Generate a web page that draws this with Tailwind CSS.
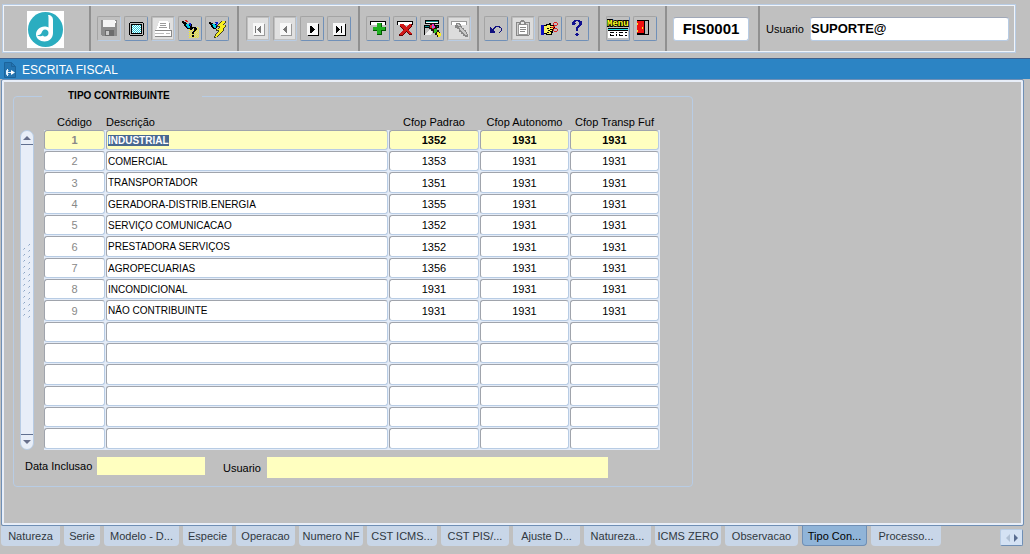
<!DOCTYPE html>
<html lang="pt-BR">
<head>
    <meta charset="UTF-8">
    <meta name="viewport" content="width=device-width, initial-scale=1.0">
    <title>Escrita Fiscal</title>
    <script src="https://cdn.jsdelivr.net/npm/@tailwindcss/browser@4"></script>
</head>
<body class="min-h-screen flex flex-col bg-[#c0c0c0] font-['Liberation_Sans',Arial,sans-serif] text-[11px] leading-[14px] text-black overflow-hidden">

    <!-- Toolbar -->
    <header class="mt-1 ml-[2px] mr-[14px] mb-[5px] border border-[#b8cce4]">
        <div class="flex h-[47px] border border-[#f0f4fa] divide-x-2 divide-[#909090] [&_button]:w-6 [&_button]:h-[25px] [&_button]:rounded-xs [&_button]:border [&_button]:border-t-[#a4a4a4] [&_button]:border-l-[#a4a4a4] [&_button]:border-r-[#7090b8] [&_button]:border-b-[#7090b8] [&_button:disabled]:border-r-[#b8cce4] [&_button:disabled]:border-b-[#b8cce4] [&_button_svg]:block">

            <div class="w-[87px] shrink-0 pl-[23px] pt-[5px]">
                <svg width="37" height="37" viewBox="0 0 37 37" role="img" aria-label="Logo">
                    <rect width="37" height="37" fill="#fff"/>
                    <circle cx="18.5" cy="18.5" r="17.5" fill="#2badc0"/>
                    <path d="M21 4c3 0 5 2 5 5v13c0 5-4 8.500-8.500 8.500S9 27.500 9 23.500s3.500-8 8.500-8c1.500 0 3 .4 4 1V8c0-1.500 0-3-.5-4z" fill="#fff"/>
                    <path d="M18 18.500c2 0 3.500 1.500 3.500 3.500s-1.500 3.500-3.500 3.500c-1 0-1.500-.3-2-1-1.500 1-4 1-6-.5 2 .3 4-.5 4.500-2s1.500-3.500 3.500-3.500z" fill="#2badc0"/>
                </svg>
            </div>

            <!-- File -->
            <div class="flex items-center gap-[3px] pl-[6px] pr-2 shrink-0">
                <button type="button" disabled aria-label="Salvar">
                    <svg width="22" height="23" shape-rendering="crispEdges">
                        <path d="M3 3h16v16H4l-1-1z" fill="#8c8c8c"/>
                        <path d="M5 3h12v7H5z" fill="#f4f4f4"/>
                        <path d="M17 4h1v2h-1z" fill="#fff"/>
                        <path d="M7 13h9v6H7z" fill="#6c6c6c"/>
                        <path d="M8 14h3v4H8z" fill="#c8c8c8"/>
                    </svg>
                </button>
                <button type="button" aria-label="Tela">
                    <svg width="22" height="23" shape-rendering="crispEdges">
                        <path d="M5 5h13v1h1v12h-1v1H5v-1H4V6h1z" fill="#000"/>
                        <path d="M5 6h13v12H5z" fill="#c0c0c0"/>
                        <path d="M6 7h11v10H6z" fill="#000"/>
                        <path d="M7 8h9v8H7z" fill="#fff"/>
                        <path d="M7 8.500h9M7 10.500h9M7 12.500h9M7 14.500h9" stroke="#20c8d8" stroke-dasharray="1 1"/>
                        <path d="M8 9.500h8M8 11.500h8M8 13.500h8M8 15.500h8" stroke="#20c8d8" stroke-dasharray="1 1"/>
                    </svg>
                </button>
                <button type="button" disabled aria-label="Imprimir">
                    <svg width="22" height="23" shape-rendering="crispEdges">
                        <path d="M1 1h20v21H1z" fill="#e0e0e0"/>
                        <path d="M7 4h9v1h1v7H5V9h1V6h1z" fill="#fff"/>
                        <path d="M8 6.500h6M8 8.500h6M7 10.500h8" stroke="#999"/>
                        <path d="M17 6h1v6h-1z" fill="#999"/>
                        <path d="M4 12h14v1h1v6H3v-6h1z" fill="#fff"/>
                        <path d="M3 13.500h16M3 19.500h17" stroke="#888"/>
                        <path d="M19 13h1v6h-1z" fill="#888"/>
                        <path d="M3 16.500h9M14 16.500h4" stroke="#bbb"/>
                    </svg>
                </button>
                <button type="button" aria-label="Consulta ajuda">
                    <svg width="22" height="23" shape-rendering="crispEdges">
                        <path d="M10 10.500h10M10 12.500h10M10 14.500h10M10 16.500h10M10 18.500h10M10 20.500h10" stroke="#f8f020" stroke-dasharray="1 1"/>
                        <path d="M11 11.500h9M11 13.500h9M11 15.500h9M11 17.500h9M11 19.500h9" stroke="#f8f020" stroke-dasharray="1 1"/>
                        <path d="M3 4.500h2M3 5.500h4M4 6.500h4M5 7.500h8M5 8.500h8M6 9.500h7M7 10.500h5M8 11.500h3" stroke="#000"/>
                        <path d="M7 7.500h3M7 8.500h3M8 9.500h3M9 10.500h2" stroke="#00d0e8"/>
                        <path d="M10 6.500h2M10 7.500h2M11 8.500h1M8 10.500h1" stroke="#1020d0"/>
                        <path d="M6 3.500h2M7 4.500h2" stroke="#e02020"/>
                        <path d="M12 10.500h5M11 11.500h3M15 11.500h3M11 12.500h2M15 12.500h3M15 13.500h2M14 14.500h2M13 15.500h2M13 16.500h2M13 18.500h2M13 19.500h2" stroke="#000"/>
                    </svg>
                </button>
                <button type="button" aria-label="Executar consulta">
                    <svg width="22" height="23" shape-rendering="crispEdges">
                        <path d="M3 5.500h2M3 6.500h4M4 7.500h7M5 8.500h8M5 9.500h7M6 10.500h5M7 11.500h3" stroke="#000"/>
                        <path d="M6 7.500h3M7 8.500h3M7 9.500h3M8 10.500h2" stroke="#00d0e8"/>
                        <path d="M9 5.500h3M10 6.500h2M10 7.500h1M10 8.500h1" stroke="#1020d0"/>
                        <path d="M15 4.500h5M14 5.500h6M13 6.500h6M12 7.500h6M11 8.500h9M11 9.500h9M13 10.500h6M12 11.500h6M10 12.500h8M10 13.500h8M12 14.500h5M11 15.500h5M10 16.500h5M9 17.500h5M9 18.500h4M8 19.500h4M8 20.500h2" stroke="#404020"/>
                        <path d="M16 4.500h3M15 5.500h4M14 6.500h4M13 7.500h4M12 8.500h7M14 9.500h5M14 10.500h4M13 11.500h4M11 12.500h6M13 13.500h4M13 14.500h3M12 15.500h3M11 16.500h3M10 17.500h3M10 18.500h2M9 19.500h2" stroke="#f8f020"/>
                    </svg>
                </button>
            </div>

            <!-- Record navigation -->
            <div class="flex items-center gap-[3px] px-[7px] shrink-0">
                <button type="button" disabled aria-label="Primeiro registro">
                    <svg width="22" height="23" shape-rendering="crispEdges">
                        <path d="M1 1h20v21H1z" fill="#e0e0e0"/>
                        <path d="M7 7h11v12H7z" fill="#999"/>
                        <path d="M6 6h11v12H6z" fill="#f8f8f8"/>
                        <path d="M8 9h1v7H8zM13 9h1v7h-1v-1h-1v-1h-1v-1h-1v-1h1v-1h1v-1h1z" fill="#777"/>
                    </svg>
                </button>
                <button type="button" disabled aria-label="Registro anterior">
                    <svg width="22" height="23" shape-rendering="crispEdges">
                        <path d="M1 1h20v21H1z" fill="#e0e0e0"/>
                        <path d="M7 7h11v12H7z" fill="#999"/>
                        <path d="M6 6h11v12H6z" fill="#f8f8f8"/>
                        <path d="M12 9h1v7h-1v-1h-1v-1h-1v-1H9v-1h1v-1h1v-1h1z" fill="#777"/>
                    </svg>
                </button>
                <button type="button" aria-label="Proximo registro">
                    <svg width="22" height="23" shape-rendering="crispEdges">
                        <path d="M7 7h11v12H7z" fill="#000"/>
                        <path d="M6 6h11v12H6z" fill="#f8f8f8"/>
                        <path d="M9 9h2v1h1v1h1v1h1v1h-1v1h-1v1h-1v1H9z" fill="#000"/>
                    </svg>
                </button>
                <button type="button" aria-label="Ultimo registro">
                    <svg width="22" height="23" shape-rendering="crispEdges">
                        <path d="M6 7h12v12H6z" fill="#000"/>
                        <path d="M5 6h12v12H5z" fill="#f8f8f8"/>
                        <path d="M8 9h1v1h1v1h1v1h1v1h-1v1h-1v1H9v1H8zM13 9h1v7h-1z" fill="#000"/>
                    </svg>
                </button>
            </div>

            <!-- Record editing -->
            <div class="flex items-center gap-[3px] px-[6px] shrink-0">
                <button type="button" aria-label="Inserir registro">
                    <svg width="22" height="23" shape-rendering="crispEdges">
                        <path d="M3 4h16v4H3z" fill="#000"/>
                        <path d="M4 5h14v3H4z" fill="#fff"/>
                        <path d="M10 6h5v4h4v4h-4v4h-5v-4H6v-4h4z" fill="#005800"/>
                        <path d="M10 6h4v4h4v3h-4v4h-4v-4H6v-3h4z" fill="#20b020"/>
                    </svg>
                </button>
                <button type="button" aria-label="Excluir registro">
                    <svg width="22" height="23" shape-rendering="crispEdges">
                        <path d="M3 4h16v4H3z" fill="#000"/>
                        <path d="M4 5h14v3H4z" fill="#fff"/>
                        <path d="M6 8l3-1 3 3 4-3h2v2l-4 4 4 4v1h-3l-3-3-4 4H5v-2l4-4-3-3z" fill="#600000"/>
                        <path d="M6 7h3l3 3 3-3h2v2l-3 3 4 5h-3l-3-3-3 4H6v-2l4-4-4-3z" fill="#d01818"/>
                    </svg>
                </button>
                <button type="button" aria-label="Entrar consulta">
                    <svg width="22" height="23" shape-rendering="crispEdges">
                        <path d="M4 3h14v4H4zM3 8h15v3H3zM3 11h1v7H3z" fill="#000"/>
                        <path d="M5 4h12v1H5zM4 9h13v1H4z" fill="#108888"/>
                        <path d="M5 5h12v1H5z" fill="#fff"/>
                        <path d="M4 17.500h6M5 16.500h6M6 15.500h5M7 14.500h4M8 13.500h3" stroke="#f0f0f0"/>
                        <path d="M9 6h4v1h1v2h2v4h2v2h1v5h-3v-2h-2v-2h-2v-2h-2v-2H8V8h1z" fill="#201010"/>
                        <path d="M9 8h2v3H9zM11 11h2v1h-2z" fill="#e82020"/>
                        <path d="M11 7h2v2h-2zM12 9h2v2h-2z" fill="#f030d0"/>
                        <path d="M11 9h1v2h-1z" fill="#30c8e0"/>
                        <path d="M13 12h3v3h-1v1h-2z" fill="#30c020"/>
                        <path d="M16 15h2v1h2v3h-1v1h-2v-2h-1z" fill="#f8f020"/>
                    </svg>
                </button>
                <button type="button" disabled aria-label="Cancelar consulta">
                    <svg width="22" height="23" shape-rendering="crispEdges">
                        <path d="M1 1h20v21H1z" fill="#dcdcdc"/>
                        <path d="M3 4h16v4H3z" fill="#999"/>
                        <path d="M4 5h14v3H4z" fill="#fff"/>
                        <path d="M8 6h4v1h1v2h1v2h2v2h2v2h1v2h1v3h-3v-1h-2v-2h-2v-2h-2v-3H9v-1H7V8h1z" fill="#888"/>
                        <path d="M9 7.500h2M10 8.500h2M11 10.500h2M12 11.500h2M12 12.500h3M13 13.500h3M14 14.500h3M15 15.500h3M16 16.500h2M17 17.500h2" stroke="#c8c8c8"/>
                    </svg>
                </button>
            </div>

            <!-- Clipboard and help -->
            <div class="flex items-center gap-[3px] pl-[5px] pr-[9px] shrink-0">
                <button type="button" aria-label="Desfazer">
                    <svg width="22" height="23" shape-rendering="crispEdges">
                        <path d="M10 9.500h5M9 10.500h2M14 10.500h2M5 10.500h1M5 11.500h2M8 11.500h2M16 11.500h1M5 12.500h4M16 12.500h1M5 13.500h4M16 13.500h1M5 14.500h5M15 14.500h1M5 15.500h5M14 15.500h1" stroke="#101080"/>
                    </svg>
                </button>
                <button type="button" disabled aria-label="Colar">
                    <svg width="22" height="23" shape-rendering="crispEdges">
                        <path d="M1 1h20v21H1z" fill="#dcdcdc"/>
                        <path d="M4 5h13v13H4z" fill="#d0d0d0" stroke="#888" stroke-linejoin="round"/>
                        <path d="M6 7h9v10H6z" fill="#fff" stroke="#999"/>
                        <path d="M9 3h3v1h1v2h1v2H7V6h1V4h1z" fill="#888"/>
                        <path d="M9 5h3v2H9z" fill="#e8e8e8"/>
                        <path d="M8 10.500h6M8 12.500h6M8 14.500h5" stroke="#888"/>
                    </svg>
                </button>
                <button type="button" aria-label="Recortar">
                    <svg width="22" height="23" shape-rendering="crispEdges">
                        <path d="M2 8h3v10H2z" fill="#1010c0"/>
                        <path d="M5 8h2V7h3V6h2v2h4v3h-1v2h-1v3h-1v2H7v-1H5z" fill="#000"/>
                        <path d="M5 9h3V8h3v1h4v1h-4v1h3v1h-3v1h2v1h-2v1h1v2H8v-1H5z" fill="#f8f060"/>
                        <path d="M8 11.500h2M9 13.500h2M8 15.500h2" stroke="#000"/>
                        <path d="M15 5.500h3M14 6.500h1M18 6.500h1M14 7.500h1M18 7.500h1M15 8.500h3M14 9.500h2M12 10.500h3M15 11.500h3M14 12.500h1M18 12.500h1M14 13.500h1M18 13.500h1M15 14.500h3" stroke="#e02020"/>
                    </svg>
                </button>
                <button type="button" aria-label="Ajuda">
                    <svg width="22" height="23" shape-rendering="crispEdges">
                        <path d="M8 3.500h6M7 4.500h3M12 4.500h4M6 5.500h3M13 5.500h3M6 6.500h4M13 6.500h3M6 7.500h3M13 7.500h3M12 8.500h3M11 9.500h3M10 10.500h3M10 11.500h2M10 12.500h2M10 13.500h2M10 16.500h2M9 17.500h4M10 18.500h2" stroke="#101090"/>
                    </svg>
                </button>
            </div>

            <!-- Menu and exit -->
            <div class="flex items-center gap-[3px] pl-[6px] pr-2 shrink-0">
                <button type="button" aria-label="Menu">
                    <svg width="22" height="23" shape-rendering="crispEdges">
                        <text x="0" y="9" class="font-['Liberation_Mono',monospace] text-[9px] font-bold" fill="#ffff20" stroke="#000" stroke-width="2" paint-order="stroke">Menu</text>
                        <path d="M1 11h20v3H1z" fill="#000"/>
                        <path d="M1 12h20v1H1z" fill="#20e0e8"/>
                        <path d="M1 14h20v7H1z" fill="#fff"/>
                        <path d="M3 15.500h4M9 15.500h1M12 15.500h4M18 15.500h2M3 17.500h1M9 17.500h1M12 17.500h1M3 18.500h4M9 18.500h1M12 18.500h4M18 18.500h2" stroke="#000"/>
                    </svg>
                </button>
                <button type="button" aria-label="Sair">
                    <svg width="22" height="23" shape-rendering="crispEdges">
                        <path d="M3 3h12v15H3z" fill="#000"/>
                        <path d="M10 4h4v13h-4z" fill="#b8b8b8"/>
                        <path d="M4 4h7v14l-2-1H4z" fill="#000"/>
                        <path d="M3 4h6l1 1v12l-1-1H3z" fill="#f01010"/>
                        <path d="M3 6h1v2H3zM3 13h1v2H3zM8 10h1v2H8z" fill="#ffe020"/>
                    </svg>
                </button>
            </div>

            <div class="flex items-center pl-[6px] pr-[9px] shrink-0">
                <input type="text" aria-label="Programa" value="FIS0001" class="w-[76px] h-6 rounded-[3px] border border-[#b8cce4] border-t-[#a0a8b8] bg-white text-center text-[15px] font-bold outline-none">
            </div>
            <div class="flex items-center flex-1 min-w-0 pl-[6px] pr-[5px]">
                <label for="user" class="w-[44px] shrink-0 pt-px">Usuario</label>
                <input id="user" type="text" value="SUPORTE@" class="flex-1 min-w-0 h-6 rounded-[3px] border border-[#b8cce4] border-t-[#a0a8b8] bg-white text-[13px] font-bold outline-none">
            </div>
        </div>
    </header>

    <!-- Window title -->
    <div class="flex items-center h-[21px] border-t border-[#40608c] bg-[#2c84c4] text-white">
        <svg width="14" height="16" viewBox="0 0 14 16" class="ml-[3px] mr-[5px] mt-[2px]">
            <path d="M1.500.5h7l4 4v11h-11z" fill="#2474b0" stroke="#1c649c"/>
            <path d="M8.500.5v4h4" fill="none" stroke="#1c649c"/>
            <path d="M5.500 8.500h-2v4h2M4.500 7v7M5 10.500h3" fill="none" stroke="#e8f4ff"/>
            <path d="M8 8l4 2.500L8 13z" fill="#fff"/>
        </svg>
        <h1 class="text-[12px] pt-px">ESCRITA FISCAL</h1>
    </div>

    <main class="flex-1 ml-px mr-[6px] border border-[#6f8fb5] rounded-xs shadow-[inset_0_0_0_2px_#e8eef8] pt-[9px] pl-[11px] pr-[11px]">
        <fieldset class="w-[680px] rounded-sm border border-[#b8cce4] pb-2">
            <legend class="ml-[28px] px-[26px] text-[10px] font-bold w-[160px] whitespace-nowrap">TIPO CONTRIBUINTE</legend>

            <div class="flex pl-[6px]">
                <!-- Scrollbar -->
                <div class="mt-[27px] mr-[10px] w-[14px] h-[320px] flex flex-col justify-between rounded-full border border-[#b8cce4] bg-[#e8eef8] overflow-hidden">
                    <button type="button" aria-label="Rolar para cima" class="h-[14px] border-b border-[#607090] flex items-center justify-center">
                        <svg width="8" height="4"><path d="M4 0l4 4H0z" fill="#68708c"/></svg>
                    </button>
                    <svg width="12" height="76" class="mb-[18px]" shape-rendering="crispEdges">
                        <path d="M3.500 5v67" stroke="#8ca4c4" stroke-dasharray="1 5"/>
                        <path d="M2.500 6v67" stroke="#b0c4dc" stroke-dasharray="1 5"/>
                        <path d="M8.500 1v74" stroke="#8ca4c4" stroke-dasharray="1 5"/>
                        <path d="M7.500 2v74" stroke="#b0c4dc" stroke-dasharray="1 5"/>
                    </svg>
                    <button type="button" aria-label="Rolar para baixo" class="h-[15px] border-t border-[#607090] flex items-center justify-center">
                        <svg width="8" height="4"><path d="M0 0h8L4 4z" fill="#68708c"/></svg>
                    </button>
                </div>

                <table class="table-fixed w-[616px] border-collapse">
                    <colgroup>
                        <col class="w-[62px]">
                        <col>
                        <col class="w-[91px]">
                        <col class="w-[90px]">
                        <col class="w-[90px]">
                    </colgroup>
                    <thead>
                        <tr class="h-[27px] align-bottom [&>th]:p-0 [&>th]:pb-px [&>th]:pr-px [&>th]:font-normal whitespace-nowrap">
                            <th>Código</th>
                            <th class="text-left">Descrição</th>
                            <th>Cfop Padrao</th>
                            <th>Cfop Autonomo</th>
                            <th>Cfop Transp Fuf</th>
                        </tr>
                    </thead>
                    <tbody id="rows" class="[&_td]:p-0 [&_td]:pr-px [&_td]:pb-px [&_td]:bg-[#e4ecf8] [&_input]:block [&_input]:w-full [&_input]:h-5 [&>tr:nth-child(3n)_input]:h-[21px] [&_input]:rounded-[3px] [&_input]:border [&_input]:border-t-[#a0a4ac] [&_input]:border-l-[#a0a4ac] [&_input]:border-r-[#b8cce4] [&_input]:border-b-[#b8cce4] [&_input]:outline-none"></tbody>
                </table>
            </div>

            <div class="flex items-start mt-[7px] pl-[11px]">
                <label for="inclusao" class="w-[72px] pt-[2px]">Data Inclusao</label>
                <input id="inclusao" type="text" class="w-[108px] h-[18px] bg-[#ffffc0] outline-none">
                <label for="usuario" class="ml-[18px] w-[44px] pt-1">Usuario</label>
                <input id="usuario" type="text" class="w-[341px] h-[21px] bg-[#ffffc0] outline-none">
            </div>
        </fieldset>
    </main>

    <!-- Tabs -->
    <nav class="flex items-start h-7 pl-px pr-[7px] text-[#303840] [&_button]:h-5 [&_button]:shrink-0 [&_button]:rounded-b-sm [&_button]:bg-[#c8d6e8] [&_button]:whitespace-nowrap">
        <div class="flex flex-1 min-w-0 gap-1 overflow-hidden" role="tablist">
            <button type="button" role="tab" class="w-[59px]">Natureza</button>
            <button type="button" role="tab" class="w-[36px]">Serie</button>
            <button type="button" role="tab" class="w-[75px]">Modelo - D...</button>
            <button type="button" role="tab" class="w-[49px]">Especie</button>
            <button type="button" role="tab" class="w-[59px]">Operacao</button>
            <button type="button" role="tab" class="w-[64px]">Numero NF</button>
            <button type="button" role="tab" class="w-[70px]">CST ICMS...</button>
            <button type="button" role="tab" class="w-[68px]">CST PIS/...</button>
            <button type="button" role="tab" class="w-[67px]">Ajuste D...</button>
            <button type="button" role="tab" class="w-[67px]">Natureza...</button>
            <button type="button" role="tab" class="w-[66px]">ICMS ZERO</button>
            <button type="button" role="tab" class="w-[73px]">Observacao</button>
            <button type="button" role="tab" aria-selected="true" class="w-[65px] border border-t-0 border-[#6f8fb5] aria-selected:bg-[#90b4d8] text-black">Tipo Con...</button>
            <button type="button" role="tab" class="w-[70px]">Processo...</button>
        </div>
        <div class="flex items-center justify-center gap-1 mt-[3px] w-[23px] h-[17px] rounded-xs border border-[#b8cce4] border-r-[#6f8fb5] border-b-[#6f8fb5] bg-[#d4e2f4]">
            <svg width="4" height="8"><path d="M4 0v8L0 4z" fill="#b0c0d4"/></svg>
            <svg width="4" height="8"><path d="M0 0v8l4-4z" fill="#586c90"/></svg>
        </div>
    </nav>

    <script>
        const data = [
            ['1', 'INDUSTRIAL', '1352', '1931', '1931'],
            ['2', 'COMERCIAL', '1353', '1931', '1931'],
            ['3', 'TRANSPORTADOR', '1351', '1931', '1931'],
            ['4', 'GERADORA-DISTRIB.ENERGIA', '1355', '1931', '1931'],
            ['5', 'SERVIÇO COMUNICACAO', '1352', '1931', '1931'],
            ['6', 'PRESTADORA SERVIÇOS', '1352', '1931', '1931'],
            ['7', 'AGROPECUARIAS', '1356', '1931', '1931'],
            ['8', 'INCONDICIONAL', '1931', '1931', '1931'],
            ['9', 'NÃO CONTRIBUINTE', '1931', '1931', '1931'],
        ];
        const labels = ['Código', 'Descrição', 'Cfop Padrao', 'Cfop Autonomo', 'Cfop Transp Fuf'];
        const styles = ['text-center text-[#888888]', 'pl-px text-[10px] selection:bg-[#486890] selection:text-white', 'text-center', 'text-center', 'text-center'];

        let html = '';
        for (let i = 0; i < 15; i++) {
            const row = data[i] || ['', '', '', '', ''];
            const state = i === 0 ? 'bg-[#ffffc0] font-bold' : 'bg-white';
            html += '<tr>' + row.map((value, c) =>
                `<td><input type="text" aria-label="${labels[c]} ${i + 1}" value="${value}" class="${state} ${styles[c]}"></td>`
            ).join('') + '</tr>';
        }
        document.getElementById('rows').innerHTML = html;

        // first description starts focused with its text selected
        const first = document.querySelector('#rows tr:first-child td:nth-child(2) input');
        first.focus();
        first.select();
    </script>
</body>
</html>
